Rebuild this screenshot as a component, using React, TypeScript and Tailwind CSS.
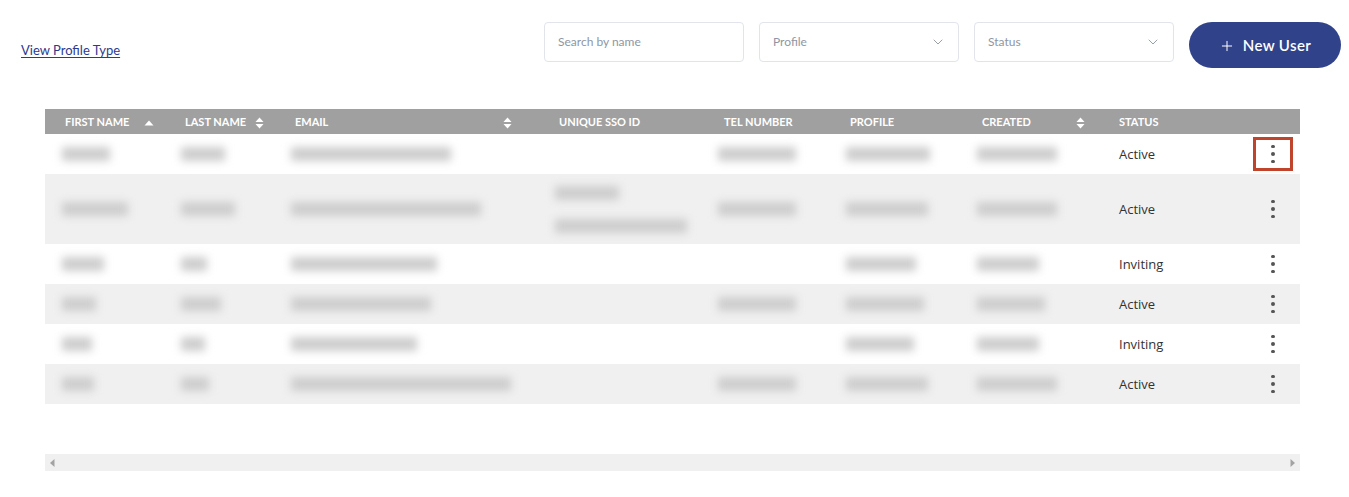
import { ChevronDown, Plus } from "lucide-react";

type Row = {
  first: number;
  last: number;
  email: number;
  sso?: [number, number];
  tel?: number;
  profile: number;
  created: number;
  status: string;
  tall?: boolean;
  grey?: boolean;
};

const rows: Row[] = [
  { first: 48, last: 44, email: 160, tel: 78, profile: 84, created: 80, status: "Active" },
  { first: 66, last: 54, email: 190, sso: [64, 132], tel: 78, profile: 82, created: 80, status: "Active", tall: true, grey: true },
  { first: 42, last: 26, email: 146, profile: 70, created: 62, status: "Inviting" },
  { first: 34, last: 40, email: 140, tel: 78, profile: 78, created: 68, status: "Active", grey: true },
  { first: 30, last: 24, email: 126, profile: 68, created: 62, status: "Inviting" },
  { first: 32, last: 28, email: 220, tel: 78, profile: 82, created: 80, status: "Active", grey: true },
];

const cols = "grid grid-cols-[120px_110px_264px_165px_126px_132px_137px_1fr_60px]";

function Blur({ w }: { w: number }) {
  return <div className="h-[14px] bg-[#cdcdcd] blur-[4px]" style={{ width: w }} />;
}

function SortBoth() {
  return (
    <svg width="9" height="12" viewBox="0 0 9 12" className="shrink-0">
      <path d="M4.5 0.5 L8.5 5 H0.5 Z" fill="#fff" />
      <path d="M4.5 11.5 L8.5 7 H0.5 Z" fill="#fff" />
    </svg>
  );
}

function SortUp() {
  return (
    <svg width="10" height="6" viewBox="0 0 10 6" className="shrink-0">
      <path d="M5 0.5 L9.5 5.5 H0.5 Z" fill="#fff" />
    </svg>
  );
}

function Dots() {
  return (
    <div className="flex flex-col items-center gap-[4px]">
      <span className="w-[3.5px] h-[3.5px] rounded-full bg-[#555]" />
      <span className="w-[3.5px] h-[3.5px] rounded-full bg-[#555]" />
      <span className="w-[3.5px] h-[3.5px] rounded-full bg-[#555]" />
    </div>
  );
}

export default function App() {
  return (
    <div className="w-[1349px] h-[497px] bg-white font-['Lato',sans-serif] text-[#333]">
      {/* Top bar */}
      <div className="flex items-start pl-[21px] pr-[8px] pt-[22px]">
        <a href="#" className="mt-[19px] text-[13px] text-[#2d3b8e] underline underline-offset-2">
          View Profile Type
        </a>
        <div className="ml-auto flex items-start gap-[15px]">
          <div className="w-[200px] h-[40px] border border-[#e1e4eb] rounded-[4px] flex items-center px-[13px] text-[12px] text-[#8f96a3]">
            Search by name
          </div>
          <div className="w-[200px] h-[40px] border border-[#e1e4eb] rounded-[4px] flex items-center justify-between pl-[13px] pr-[12px] text-[12px] text-[#8f96a3]">
            Profile
            <ChevronDown className="w-[16px] h-[16px] text-[#9aa0ab]" strokeWidth={1.5} />
          </div>
          <div className="w-[200px] h-[40px] border border-[#e1e4eb] rounded-[4px] flex items-center justify-between pl-[13px] pr-[12px] text-[12px] text-[#8f96a3]">
            Status
            <ChevronDown className="w-[16px] h-[16px] text-[#9aa0ab]" strokeWidth={1.5} />
          </div>
          <button className="w-[152px] h-[46px] rounded-full bg-[#30428a] text-white flex items-center justify-center gap-[8px] pt-[1px] text-[15px] font-semibold tracking-wide">
            <Plus className="w-[16px] h-[16px]" strokeWidth={1.5} />
            New User
          </button>
        </div>
      </div>

      {/* Table */}
      <div className="ml-[45px] w-[1255px] mt-[41px]">
        <div className={`${cols} h-[25px] pt-[2px] bg-[#a0a0a0] text-white text-[11px] font-bold uppercase items-center`}>
          <div className="flex items-center justify-between pl-[20px] pr-[11px]">First Name<SortUp /></div>
          <div className="flex items-center justify-between pl-[20px] pr-[11px]">Last Name<SortBoth /></div>
          <div className="flex items-center justify-between pl-[20px] pr-[27px]">Email<SortBoth /></div>
          <div className="pl-[20px]">Unique SSO ID</div>
          <div className="pl-[20px]">Tel Number</div>
          <div className="pl-[20px]">Profile</div>
          <div className="flex items-center justify-between pl-[20px] pr-[14px]">Created<SortBoth /></div>
          <div className="pl-[20px]">Status</div>
          <div />
        </div>

        {rows.map((r, i) => (
          <div
            key={i}
            className={`${cols} items-center ${r.tall ? "h-[70px]" : "h-[40px]"} ${r.grey ? "bg-[#f0f0f0]" : "bg-white"}`}
          >
            <div className="pl-[17px]"><Blur w={r.first} /></div>
            <div className="pl-[16px]"><Blur w={r.last} /></div>
            <div className="pl-[16px]"><Blur w={r.email} /></div>
            <div className="pl-[16px] flex flex-col gap-[19px]">
              {r.sso && (
                <>
                  <Blur w={r.sso[0]} />
                  <Blur w={r.sso[1]} />
                </>
              )}
            </div>
            <div className="pl-[14px]">{r.tel && <Blur w={r.tel} />}</div>
            <div className="pl-[16px]">{r.profile && <Blur w={r.profile} />}</div>
            <div className="pl-[15px]"><Blur w={r.created} /></div>
            <div className="pl-[20px] pt-[2px] text-[13px] font-['Open_Sans',sans-serif] text-[#333]">{r.status}</div>
            <div className="flex justify-center pl-[6px]">
              {i === 0 ? (
                <div className="w-[40px] h-[34px] border-[3px] border-[#c0432c] flex items-center justify-center">
                  <Dots />
                </div>
              ) : (
                <Dots />
              )}
            </div>
          </div>
        ))}
      </div>

      {/* Horizontal scrollbar */}
      <div className="ml-[45px] w-[1255px] mt-[50px] h-[17px] bg-[#f0f0f0] flex items-center justify-between px-[5px]">
        <svg width="5" height="8" viewBox="0 0 5 8"><path d="M4.5 0 V8 L0 4 Z" fill="#a3a3a3" /></svg>
        <svg width="5" height="8" viewBox="0 0 5 8"><path d="M0.5 0 V8 L5 4 Z" fill="#a3a3a3" /></svg>
      </div>
    </div>
  );
}
